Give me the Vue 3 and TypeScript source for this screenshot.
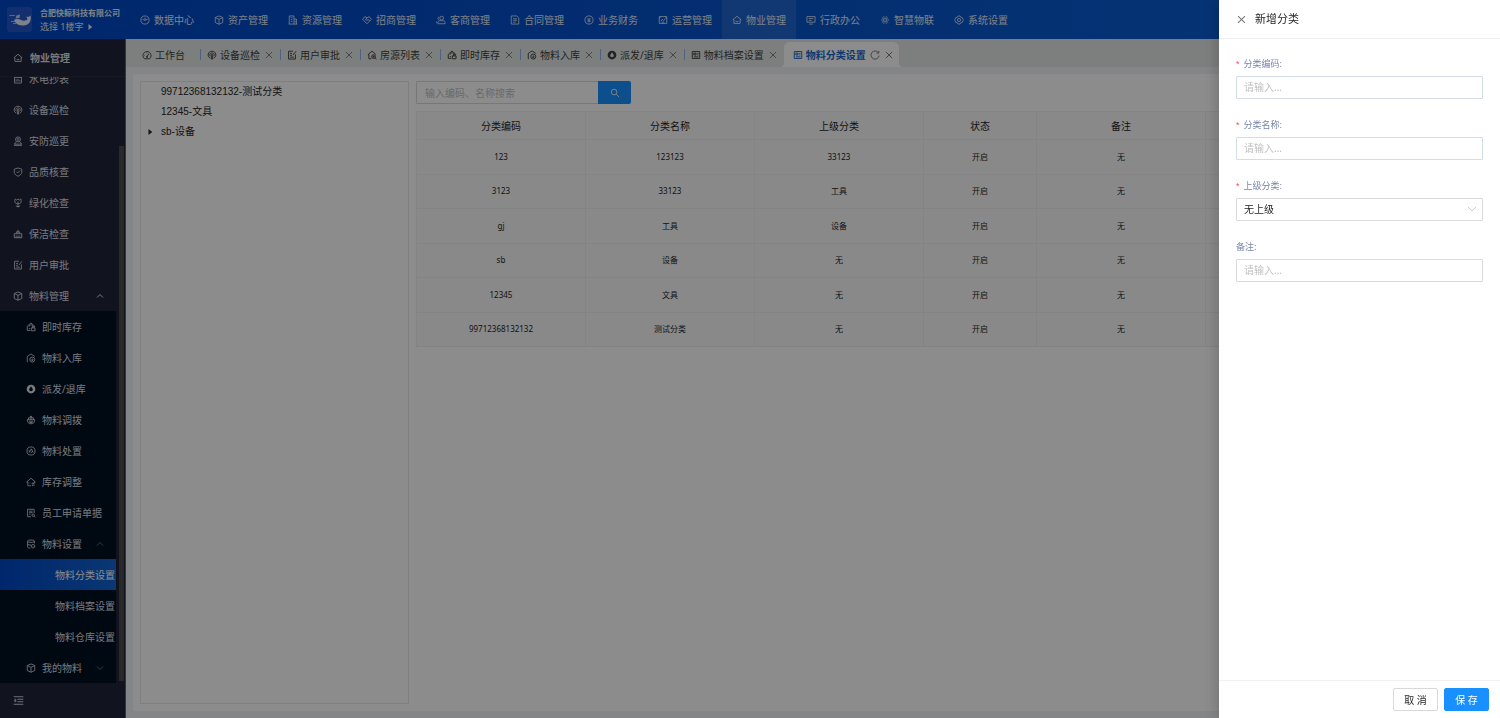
<script setup lang="ts">
import { ref } from 'vue'

interface NavItem { icon: string; label: string; active?: boolean }
interface MenuItem { icon?: string; label: string; level: number; arrow?: 'up' | 'down'; active?: boolean; dim?: boolean }
interface Tab { icon: string; label: string; fixed?: boolean; active?: boolean }
interface Row { code: string; name: string; parent: string }

const icons: Record<string, string> = {
  pie: 'M8 1.5a6.5 6.5 0 1 0 0 13a6.5 6.5 0 1 0 0-13M8 4V8.500L12.500 6.500M4 7L8 8.500',
  cube: 'M8 1.5L14 4V12L8 14.8L2 12V4ZM2 4L8 7L14 4M8 7V14.8',
  building: 'M2 14.5V1.5H9.5V14.5M1 14.5H15M9.5 6.5H13.5V14.5M4.5 4.5H7M4.5 7.5H7M4.5 10.5H7M11.5 9V12',
  deal: 'M4.5 2.5L8 4.5L11.5 2.5L15 7L8 14L1 7ZM8 4.5L5.5 7.5L8 8.5L10 7L12 9.5',
  users: 'M9 2a3 3 0 1 0 0 6a3 3 0 1 0 0-6M3 14V12C3 9.5 5 9 9 9S14.5 9.500 14.500 12V14ZM5 3.500C2.500 3.500 2.500 7.500 4.500 7.500M1 13V10.500',
  doc: 'M2 1.500H11L14 4.500V14.500H2ZM5 6H11M5 8.500H11M5 11.500H9',
  yen: 'M8 1.500a6.500 6.500 0 1 0 0 13a6.500 6.500 0 1 0 0-13M5.500 4.500L8 7.500L10.500 4.500M8 7.500V12M5.500 8H10.500M5.500 10H10.500',
  ops: 'M2 2.500H14V13.500H2ZM2 5.500L4.500 2.500M14 5.500L11.500 2.500M4.500 10L7 7L9 9L12 5.500M6 11.500H10',
  home: 'M8 2L14.500 7.500H13V13.500H3V7.500H1.500ZM5.500 9.500C6.500 11.500 9.500 11.500 10.500 9.500',
  monitor: 'M1.500 2.500H14.500V11.500H1.500ZM5 14.500H11M4.500 5.500H11.500M4.500 8.500H9',
  spark: 'M8 5a3 3 0 1 0 0 6a3 3 0 1 0 0-6M6 2V4M10 2V4M6 12V14M10 12V14M1.500 8H4M12 8H14.500M3 4L5 5.500M13 4L11 5.500M3 12L5 10.500M13 12L11 10.500M8 7V9',
  gear: 'M6.500 1.500H9.500L10.500 3.500L13 4L14.500 7V9L13 12L10.500 12.500L9.500 14.500H6.500L5.500 12.500L3 12L1.500 9V7L3 4L5.500 3.500ZM8 5.500a2.500 2.500 0 1 0 0 5a2.500 2.500 0 1 0 0-5',
  gauge: 'M4 14C-.5 10.500 1.500 2.500 8 2.500S16.500 10.500 12 14ZM8 10.500L11 6M8 10a1 1 0 1 0 0 2a1 1 0 1 0 0-2M4 8.500H5M8 4.500V5.500',
  beacon: 'M5 13C-.5 10 1.500 2 8 2S16.500 10 11 13M5.500 10C3 7.500 5 4.800 8 4.800S13 7.500 10.500 10M8 7a1.200 1.200 0 1 0 0 2.400a1.200 1.200 0 1 0 0-2.400M7 10.500H9V14.500H7Z',
  docpen: 'M9.500 2H2.500V14.500H13.500V7M5 5.500H8M5 8.500H8M5 11.500H11M9.500 8L14.500 2',
  housesearch: 'M14 7L8 1.800L1.500 7.500H3V14H7M10.500 7.500a3 3 0 1 0 0 6a3 3 0 1 0 0-6M12.800 12.500L15 15M10.500 9V12M9 10.500H12',
  houselock: 'M8 1.500L2 7V13.500H7M8 1.500L14 7V8M5 7.500C5 3.500 11 3.500 11 7.500M8.500 9.500H14.500V14H8.500ZM10 9.500V7.500H13V9.500M4.500 10.500H6.500',
  housein: 'M3 14H2V5.500L8 1.500L14 5.500M10 6.500a4 4 0 1 0 0 8a4 4 0 1 0 0-8M10 8.500V12.500M8 10.500L10 12.500L12 10.500',
  allot: 'M2 7.500H14C14 12 12 14 8 14S2 12 2 7.500ZM4 7.500V4.500H12V7.500M8 1.500V7.500M6 3.500L8 1.500L10 3.500M4.500 10H11.500M5.500 12H10.500',
  dispose: 'M8 1.500a6.500 6.500 0 1 0 0 13a6.500 6.500 0 1 0 0-13M5 10.500L8.500 4.500L11.500 10.500M4 8H7M7.500 11.500L11 8',
  adjust: 'M4 14H3V8H1L8 2L15 8H13V10M4 14H8M9 10.500H13L11.500 9M14 13H9.500L11 14.500M6 9.500H7',
  form: 'M13 8V2H2.500V14H8M5 5H10.500M5 7.500H10.500M5 10H7M11.500 9.500a2 2 0 1 0 0 4a2 2 0 1 0 0-4M13 13L14.500 15',
  database: 'M2.500 3.500C2.500 1 13.500 1 13.500 3.500V7M2.500 3.500C2.500 6 13.500 6 13.500 3.500M2.500 3.500V12.500C2.500 14 5 14.500 7 14.500M2.500 8C3 9.500 6 9.800 8 9.500M11 8.500L14 10V13L11 14.500L8.500 13V10ZM11 11V12',
  meter: 'M2.500 2H13.500V14.500H2.500ZM2.500 5.500H13.500M5 12V8.500M8 12V7.500M11 12V9.500M5 1V3M11 1V3',
  guard: 'M8 1.500a4 4 0 1 0 0 8a4 4 0 1 0 0-8M8 4a1.500 1.500 0 1 0 0 3a1.500 1.500 0 1 0 0-3M5.500 9L2 13H14L10.500 9M1.500 15H14.500',
  shield: 'M8 1.500L14 3.500V8.500C14 11.500 11 13.500 8 14.800C5 13.500 2 11.500 2 8.500V3.500ZM5.500 7.500L7.500 9.500L11 6',
  flower: 'M8 9C2 10 2.500 4 3.500 1.500L6 3.500L8 1.500L10 3.500L12.500 1.500C13.500 4 14 10 8 9V15M4.500 12.500L8 14M11.500 12.500L8 14M8 9V6',
  broom: 'M2 7.500H14V14H2ZM8 1.500V7M5.500 7V4.500H10.500V7M5 14V10.500M8 14V10.500M11 14V10.500',
  panel: 'M2 2.500H14V13.500H2ZM4.500 5H8V8H4.500ZM10 5.500H12M10 8H12M4.500 11H12',
  fold: 'M1 2.500H15M6.500 6.200H15M6.500 9.800H15M1 13.500H15M4 6L1.500 8L4 10Z',
  close: 'M3 3L13 13M13 3L3 13',
  up: 'M2 11L8 5L14 11',
  down: 'M2 5L8 11L14 5',
  reload: 'M13.500 4.500A6.500 6.500 0 1 0 14.500 9M14 1.500V5H10.500',
  search: 'M6.500 2a4.500 4.500 0 1 0 0 9a4.500 4.500 0 1 0 0-9M10 10L14.500 14.500',
}
const solid = 'M8 1a7 7 0 1 0 0 14a7 7 0 1 0 0-14ZM8 3.500L11 8.500A3 3 0 1 1 5 8.500Z'

const nav: NavItem[] = [
  { icon: 'pie', label: '数据中心' },
  { icon: 'cube', label: '资产管理' },
  { icon: 'building', label: '资源管理' },
  { icon: 'deal', label: '招商管理' },
  { icon: 'users', label: '客商管理' },
  { icon: 'doc', label: '合同管理' },
  { icon: 'yen', label: '业务财务' },
  { icon: 'ops', label: '运营管理' },
  { icon: 'home', label: '物业管理', active: true },
  { icon: 'monitor', label: '行政办公' },
  { icon: 'spark', label: '智慧物联' },
  { icon: 'gear', label: '系统设置' },
]

const menu: MenuItem[] = [
  { icon: 'meter', label: '水电抄表', level: 1 },
  { icon: 'beacon', label: '设备巡检', level: 1 },
  { icon: 'guard', label: '安防巡更', level: 1 },
  { icon: 'shield', label: '品质核查', level: 1 },
  { icon: 'flower', label: '绿化检查', level: 1 },
  { icon: 'broom', label: '保洁检查', level: 1 },
  { icon: 'docpen', label: '用户审批', level: 1 },
  { icon: 'cube', label: '物料管理', level: 1, arrow: 'up' },
  { icon: 'houselock', label: '即时库存', level: 2 },
  { icon: 'housein', label: '物料入库', level: 2 },
  { icon: 'drop', label: '派发/退库', level: 2 },
  { icon: 'allot', label: '物料调拨', level: 2 },
  { icon: 'dispose', label: '物料处置', level: 2 },
  { icon: 'adjust', label: '库存调整', level: 2 },
  { icon: 'form', label: '员工申请单据', level: 2 },
  { icon: 'database', label: '物料设置', level: 2, arrow: 'up', dim: true },
  { label: '物料分类设置', level: 3, active: true },
  { label: '物料档案设置', level: 3 },
  { label: '物料仓库设置', level: 3 },
  { icon: 'cube', label: '我的物料', level: 2, arrow: 'down', dim: true },
]

const tabs: Tab[] = [
  { icon: 'gauge', label: '工作台', fixed: true },
  { icon: 'beacon', label: '设备巡检' },
  { icon: 'docpen', label: '用户审批' },
  { icon: 'housesearch', label: '房源列表' },
  { icon: 'houselock', label: '即时库存' },
  { icon: 'housein', label: '物料入库' },
  { icon: 'drop', label: '派发/退库' },
  { icon: 'panel', label: '物料档案设置' },
  { icon: 'panel', label: '物料分类设置', active: true },
]

const tree = [
  { label: '99712368132132-测试分类', branch: false },
  { label: '12345-文具', branch: false },
  { label: 'sb-设备', branch: true },
]

const rows: Row[] = [
  { code: '123', name: '123123', parent: '33123' },
  { code: '3123', name: '33123', parent: '工具' },
  { code: 'gj', name: '工具', parent: '设备' },
  { code: 'sb', name: '设备', parent: '无' },
  { code: '12345', name: '文具', parent: '无' },
  { code: '99712368132132', name: '测试分类', parent: '无' },
]

const keyword = ref('')
const code = ref('')
const name = ref('')
const parent = ref('none')
const remark = ref('')
</script>

<template>
  <div class="app">
    <header class="top">
      <div class="brand">
        <svg class="logo" viewBox="0 0 25 25" aria-hidden="true">
          <rect width="25" height="25" rx="3" fill="#2657c8" />
          <path d="M7 13C9 11.500 12 11.500 14 13C16 14 19 14 20.500 12.500L19.500 9.500L21.500 10L23.500 8.500C24.500 12 23.500 18 17 18.500C12 18.800 8.500 17 7 13Z" fill="#e8edf8" />
          <path d="M8.500 11.500L9.500 8.500L13 7.500L12.500 11Z" fill="#c3d0ee" />
          <path d="M2.500 8.500H8M4 14.500H8M6 16.500H9.500" stroke="#9fb8ee" fill="none" />
        </svg>
        <div class="who">
          <strong>合肥快鲸科技有限公司</strong>
          <button type="button" class="picker">选择 1楼宇
            <svg class="tri" viewBox="0 0 8 8" aria-hidden="true"><path d="M2 0L7 4L2 8Z" /></svg>
          </button>
        </div>
      </div>
      <nav class="nav">
        <a v-for="n in nav" :key="n.label" href="#" :class="{ active: n.active }">
          <svg class="ico" viewBox="0 0 16 16" aria-hidden="true"><path :d="icons[n.icon]" /></svg>{{ n.label }}
        </a>
      </nav>
    </header>

    <div class="body">
      <aside class="side">
        <div class="side-title">
          <svg class="ico" viewBox="0 0 16 16" aria-hidden="true"><path :d="icons.home" /></svg>物业管理
        </div>
        <div class="side-scroll">
          <nav class="menu">
            <a v-for="m in menu" :key="m.label" href="#" :class="['lv' + m.level, { active: m.active }]">
              <svg v-if="m.icon === 'drop'" class="ico solid" viewBox="0 0 16 16" aria-hidden="true"><path :d="solid" /></svg>
              <svg v-else-if="m.icon" class="ico" viewBox="0 0 16 16" aria-hidden="true"><path :d="icons[m.icon]" /></svg>
              <span>{{ m.label }}</span>
              <svg v-if="m.arrow" :class="['ico', 'arrow', { dim: m.dim }]" viewBox="0 0 16 16" aria-hidden="true"><path :d="icons[m.arrow]" /></svg>
            </a>
          </nav>
          <div class="gutter"><div class="thumb"></div></div>
        </div>
        <button type="button" class="fold" aria-label="收起菜单">
          <svg class="ico" viewBox="0 0 16 16" aria-hidden="true"><path :d="icons.fold" /></svg>
        </button>
      </aside>

      <main class="main">
        <div class="tabs">
          <div v-for="t in tabs" :key="t.label" :class="['tab', { fixed: t.fixed, active: t.active }]">
            <svg v-if="t.icon === 'drop'" class="ico solid" viewBox="0 0 16 16" aria-hidden="true"><path :d="solid" /></svg>
            <svg v-else class="ico" viewBox="0 0 16 16" aria-hidden="true"><path :d="icons[t.icon]" /></svg>
            <a href="#">{{ t.label }}</a>
            <button v-if="t.active" type="button" class="reload" aria-label="刷新">
              <svg class="ico" viewBox="0 0 16 16" aria-hidden="true"><path :d="icons.reload" /></svg>
            </button>
            <button v-if="!t.fixed" type="button" aria-label="关闭标签">
              <svg class="ico" viewBox="0 0 16 16" aria-hidden="true"><path :d="icons.close" /></svg>
            </button>
          </div>
        </div>

        <div class="card">
          <ul class="tree">
            <li v-for="n in tree" :key="n.label">
              <svg class="tri" viewBox="0 0 8 8" aria-hidden="true"><path v-if="n.branch" d="M2 0L7 4L2 8Z" /></svg>
              <span>{{ n.label }}</span>
            </li>
          </ul>
          <section class="list">
            <form class="search" @submit.prevent>
              <input v-model="keyword" type="text" aria-label="搜索" placeholder="输入编码、名称搜索">
              <button type="submit" aria-label="查询">
                <svg class="ico" viewBox="0 0 16 16" aria-hidden="true"><path :d="icons.search" /></svg>
              </button>
            </form>
            <table>
              <colgroup>
                <col class="wide"><col class="wide"><col class="wide"><col class="slim"><col class="wide"><col>
              </colgroup>
              <thead>
                <tr><th>分类编码</th><th>分类名称</th><th>上级分类</th><th>状态</th><th>备注</th><td></td></tr>
              </thead>
              <tbody>
                <tr v-for="r in rows" :key="r.code">
                  <td>{{ r.code }}</td><td>{{ r.name }}</td><td>{{ r.parent }}</td><td>开启</td><td>无</td><td></td>
                </tr>
              </tbody>
            </table>
          </section>
        </div>
      </main>
    </div>

    <div class="mask"></div>
    <section class="drawer" role="dialog" aria-labelledby="drawer-title">
      <header class="drawer-head">
        <button type="button" aria-label="关闭">
          <svg class="ico" viewBox="0 0 16 16" aria-hidden="true"><path :d="icons.close" /></svg>
        </button>
        <h2 id="drawer-title">新增分类</h2>
      </header>
      <form id="category-form" class="drawer-body" @submit.prevent>
        <div class="field tint">
          <label for="f-code"><i>*</i>分类编码:</label>
          <input id="f-code" v-model="code" type="text" placeholder="请输入...">
        </div>
        <div class="field tint">
          <label for="f-name"><i>*</i>分类名称:</label>
          <input id="f-name" v-model="name" type="text" placeholder="请输入...">
        </div>
        <div class="field">
          <label for="f-parent"><i>*</i>上级分类:</label>
          <div class="select">
            <select id="f-parent" v-model="parent"><option value="none">无上级</option></select>
            <svg class="ico" viewBox="0 0 16 16" aria-hidden="true"><path :d="icons.down" /></svg>
          </div>
        </div>
        <div class="field">
          <label for="f-remark">备注:</label>
          <input id="f-remark" v-model="remark" type="text" placeholder="请输入...">
        </div>
      </form>
      <footer class="drawer-foot">
        <button type="button">取 消</button>
        <button type="submit" form="category-form" class="primary">保 存</button>
      </footer>
    </section>
  </div>
</template>

<style>
body { margin: 0; }
</style>

<style scoped>
* { box-sizing: border-box; }
.app {
  display: flex;
  flex-direction: column;
  height: 100vh;
  overflow: hidden;
  font: 10px/16px "Noto Sans", "Noto Sans CJK SC", sans-serif;
  color: #262626;
  background: #eff2f6;
}
a { color: inherit; text-decoration: none; }
button { font: inherit; color: inherit; background: none; border: 0; padding: 0; display: flex; align-items: center; cursor: pointer; }
input, select { font: inherit; color: inherit; }
.ico { width: 10px; height: 10px; flex: none; fill: none; stroke: currentColor; stroke-width: 1.3; }
.ico.solid { fill: currentColor; fill-rule: evenodd; stroke: none; }
.tri { width: 6px; height: 6px; flex: none; fill: currentColor; }

.top {
  display: flex;
  flex: none;
  height: 39px;
  color: #e6ebf5;
  background: linear-gradient(90deg, #0047c4, #0d62d6);
}
.brand { display: flex; align-items: center; gap: 8px; width: 130px; padding-left: 7px; }
.logo { width: 25px; height: 25px; flex: none; }
.who { display: flex; flex-direction: column; white-space: nowrap; }
.who strong { font-size: 8px; line-height: 14px; }
.picker { font-size: 9px; line-height: 14px; gap: 3px; }
.nav { display: flex; }
.nav a { display: flex; align-items: center; gap: 4px; padding: 0 10px; white-space: nowrap; }
.nav a.active { background: rgba(255, 255, 255, .1); }

.body { display: flex; flex: 1; min-height: 0; }
.side {
  display: flex;
  flex-direction: column;
  flex: none;
  width: 126px;
  color: #dcdee4;
  background: #20263a;
  border-right: 1px solid #56647c;
}
.side-title {
  display: flex;
  align-items: center;
  gap: 7px;
  flex: none;
  height: 38px;
  padding-left: 13px;
  font-weight: 700;
  border-bottom: 1px solid #2b3040;
}
.side-scroll { display: flex; flex: 1; min-height: 0; overflow: hidden; }
.menu { display: flex; flex-direction: column; justify-content: flex-end; flex: 1; }
.menu a { display: flex; align-items: center; flex: none; height: 31px; white-space: nowrap; }
.menu span { flex: 1; }
.lv1 { padding-left: 13px; gap: 6px; }
.lv2 { padding-left: 26px; gap: 6px; background: #001122; }
.lv3 { padding-left: 55px; background: #001122; }
.menu a.active { background: linear-gradient(90deg, #0047c4, #1464d2); color: #fff; }
.arrow { width: 8px; height: 8px; margin-right: 12px; stroke-width: 2; }
.arrow.dim { opacity: .45; }
.gutter { display: flex; flex-direction: column; justify-content: flex-end; width: 9px; padding: 0 1px 2px 3px; }
.thumb { height: 535px; background: #4b4b4b; }
.fold { flex: none; height: 35px; padding-left: 13px; }
.fold .ico { width: 11px; height: 11px; }

.main { display: flex; flex-direction: column; flex: 1; min-width: 0; }
.tabs { display: flex; align-items: flex-end; flex: none; height: 28px; padding-left: 9px; color: #3d3f40; background: #e4e8e6; }
.tab { position: relative; display: flex; align-items: center; gap: 3px; height: 25px; padding: 0 6px 0 7px; white-space: nowrap; }
.tab::after { content: ""; position: absolute; right: -1px; top: 7px; height: 11px; width: 1px; background: #8fb5ea; }
.tab.fixed { padding-right: 15px; }
.tab .ico { stroke-width: 1.5; }
.tab button { margin-left: 1px; color: #777; }
.tab:nth-last-child(2)::after { display: none; }
.tab.active { padding: 0 5px 0 9px; color: #1668cc; font-weight: 700; background: #fff; border-radius: 6px 6px 0 0; }
.tab.active::before, .tab.active::after {
  content: "";
  position: absolute;
  top: auto;
  bottom: 0;
  width: 4px;
  height: 4px;
}
.tab.active::before { left: -4px; background: radial-gradient(circle at 0 0, transparent 4px, #fff 4px); }
.tab.active::after { right: -4px; background: radial-gradient(circle at 100% 0, transparent 4px, #fff 4px); }
.card {
  display: flex;
  gap: 7px;
  flex: 1;
  min-height: 0;
  margin: 7px;
  padding: 7px;
  background: #fff;
  border-radius: 3px;
}
.tree { width: 269px; flex: none; margin: 0; padding: 0; list-style: none; border: 1px solid #e8e8e8; font-family: "Liberation Sans", "Noto Sans CJK SC", sans-serif; }
.tree li { display: flex; align-items: center; gap: 8px; height: 20px; padding-left: 6px; }
.list { flex: 1; min-width: 0; }
.search { display: flex; height: 23px; margin-bottom: 7px; }
.search input { width: 182px; padding: 0 8px; border: 1px solid #d9d9d9; border-right: 0; border-radius: 2px 0 0 2px; background: #fff; }
.search button { justify-content: center; width: 33px; color: #fff; background: #1890ff; border-radius: 0 2px 2px 0; }
input::placeholder { color: #bfbfbf; opacity: 1; }
table { width: 100%; height: 236px; table-layout: fixed; border-collapse: collapse; text-align: center; background: #fafafa; }
col.wide { width: 169px; }
col.slim { width: 113px; }
th, td { padding: 0; border: 1px solid #f0f0f0; }
thead tr { height: 28px; }
th { font-weight: 400; color: #1f1f1f; }
td { font-size: 8px; line-height: 12px; }

.mask { position: fixed; inset: 0; background: rgba(0, 0, 0, .45); }
.drawer {
  position: fixed;
  top: 0;
  right: 0;
  bottom: 0;
  display: flex;
  flex-direction: column;
  width: 281px;
  background: #fff;
  box-shadow: -4px 0 12px rgba(0, 0, 0, .15);
}
.drawer-head { display: flex; align-items: center; gap: 8px; flex: none; height: 39px; padding-left: 17px; border-bottom: 1px solid #f0f0f0; }
.drawer-head button { color: #777; }
.drawer-head .ico { width: 11px; height: 11px; stroke-width: 1.5; }
.drawer-head h2 { margin: 0; font-size: 11px; font-weight: 400; }
.drawer-body { display: flex; flex-direction: column; gap: 18px; flex: 1; padding: 17px; }
.field label { display: block; height: 20px; font-size: 9px; line-height: 16px; color: #7886ab; }
.field label i { margin-right: 4px; color: #ff4d4f; font-family: "Liberation Sans", sans-serif; font-style: normal; }
.field input, .select select { display: block; width: 100%; height: 23px; padding: 0 7px 1px; border: 1px solid #d9d9d9; border-radius: 1px; background: #fff; outline: 0; }
.field.tint input { border-color: #d3dde8; }
.select { position: relative; }
.select select { appearance: none; }
.select .ico { position: absolute; right: 6px; top: 6px; color: #b5b5b5; pointer-events: none; }
.drawer-foot { display: flex; align-items: center; justify-content: flex-end; gap: 6px; flex: none; height: 38px; padding-right: 11px; border-top: 1px solid #f0f0f0; }
.drawer-foot button { justify-content: center; width: 45px; height: 23px; border: 1px solid #d9d9d9; border-radius: 2px; }
.drawer-foot button.primary { color: #fff; background: #1890ff; border-color: #1890ff; }
</style>
